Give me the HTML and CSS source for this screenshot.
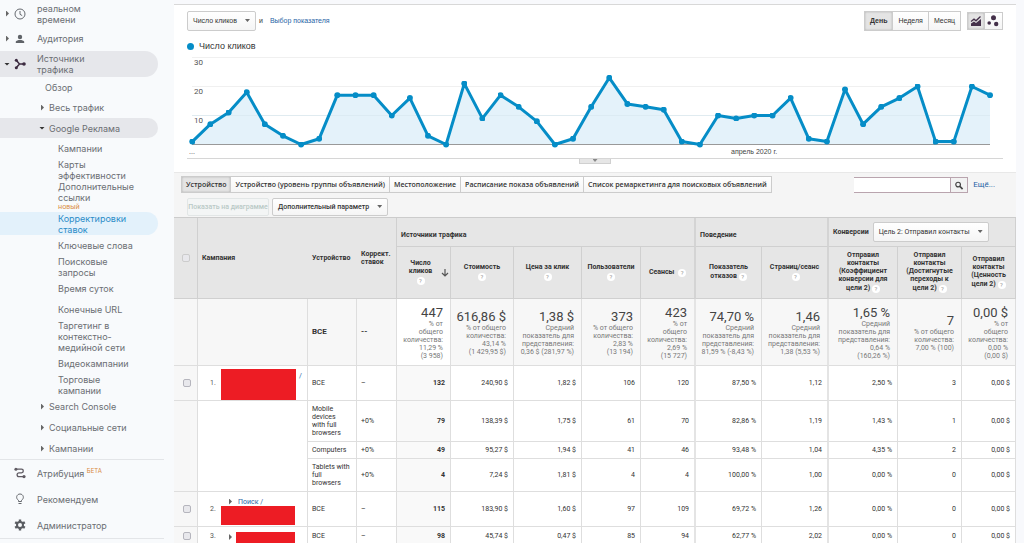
FILE: index.html
```html
<!DOCTYPE html>
<html lang="ru">
<head>
<meta charset="utf-8">
<title>Корректировки ставок</title>
<link rel="stylesheet" href="styles.css">
</head>
<body>
<div class="app">
<nav class="sidebar">
  <ul class="nav">
    <li><a class="item top first" href="#"><span class="caret"></span><svg class="icon" viewBox="0 0 12 12"><circle cx="6" cy="6" r="5" fill="none" stroke="#666a70"/><path d="M6 3v3.3l2.2 1.3" fill="none" stroke="#666a70"/></svg><span>реальном<br>времени</span></a></li>
    <li><a class="item top second" href="#"><span class="caret"></span><svg class="icon" viewBox="0 0 12 12"><circle cx="6" cy="4" r="2.2" fill="#5f6368"/><path d="M1.8 10V8.8C1.8 7.4 4.5 6.9 6 6.9s4.200.5 4.200 1.900V10z" fill="#5f6368"/></svg><span>Аудитория</span></a></li>
    <li><a class="item top pill tall" href="#"><span class="caret open"></span><svg class="icon" viewBox="0 0 12 12"><path d="M2.500 2.500 5.500 6 2.500 9.500M5.500 6h4.500" fill="none" stroke="#3c2b40" stroke-width="1.500"/><circle cx="2.300" cy="2.300" r="1.500" fill="#3c2b40"/><circle cx="2.300" cy="9.700" r="1.500" fill="#3c2b40"/><circle cx="10" cy="6" r="1.800" fill="#3c2b40"/></svg><span>Источники<br>трафика</span></a></li>
    <li><a class="item mid plain" href="#">Обзор</a></li>
    <li><a class="item mid" href="#"><span class="caret"></span>Весь трафик</a></li>
    <li><a class="item mid pill" href="#"><span class="caret open"></span>Google Реклама</a></li>
    <li><a class="item leaf" href="#">Кампании</a></li>
    <li><a class="item leaf" href="#">Карты<br>эффективности</a></li>
    <li><a class="item leaf" href="#">Дополнительные<br>ссылки</a></li>
    <li class="new">новый</li>
    <li><a class="item leaf pill current" href="#">Корректировки<br>ставок</a></li>
    <li><a class="item leaf" href="#">Ключевые слова</a></li>
    <li><a class="item leaf" href="#">Поисковые<br>запросы</a></li>
    <li><a class="item leaf" href="#">Время суток</a></li>
    <li><a class="item leaf" href="#">Конечные URL</a></li>
    <li><a class="item leaf" href="#">Таргетинг в<br>контекстно-<br>медийной сети</a></li>
    <li><a class="item leaf" href="#">Видеокампании</a></li>
    <li><a class="item leaf" href="#">Торговые<br>кампании</a></li>
    <li><a class="item mid" href="#"><span class="caret"></span>Search Console</a></li>
    <li><a class="item mid" href="#"><span class="caret"></span>Социальные сети</a></li>
    <li><a class="item mid" href="#"><span class="caret"></span>Кампании</a></li>
  </ul>
  <ul class="nav footer">
    <li><a class="item top" href="#"><svg class="icon" viewBox="0 0 12 12"><path d="M2 2.200h5.500a1.800 1.800 0 0 1 0 3.600H5a1.900 1.900 0 0 0 0 3.800h5" fill="none" stroke="#5f5a62" stroke-width="1.300"/><circle cx="1.900" cy="2.200" r="1.500" fill="#5f5a62"/><circle cx="10" cy="9.600" r="1.600" fill="#5f5a62"/></svg><span>Атрибуция <sup>БЕТА</sup></span></a></li>
    <li><a class="item top" href="#"><svg class="icon" viewBox="0 0 12 12"><path d="M4.500 8.500V7.300C1.200 5.200 2.700 1 6 1s4.800 4.200 1.500 6.300v1.200zM4.500 10.500h3" fill="none" stroke="#66696e"/></svg><span>Рекомендуем</span></a></li>
    <li><a class="item top" href="#"><svg class="icon" viewBox="0 0 12 12"><circle cx="6" cy="6" r="3" fill="none" stroke="#5a5d62" stroke-width="2"/><path d="M6 .4v2.400M6 9.200v2.400M1.150 3.200l2.080 1.200M8.770 7.600l2.080 1.200M1.150 8.800l2.080-1.200M8.770 4.400l2.080-1.200" stroke="#5a5d62" stroke-width="2.400"/></svg><span>Администратор</span></a></li>
  </ul>
</nav>

<main class="main">
  <section class="card">
    <div class="toolbar">
      <button class="btn drop" type="button">Число кликов</button>
      <span>и</span>
      <a class="link metric" href="#">Выбор показателя</a>
      <div class="group period">
        <button class="btn on" type="button">День</button><button class="btn" type="button">Неделя</button><button class="btn" type="button">Месяц</button>
      </div>
      <div class="group views">
        <button class="btn on" type="button" aria-label="График"><svg viewBox="0 0 12 12"><path d="M1 11V8.500l3-2 2 1.500 5-4V11z" fill="#44304a"/><path d="M1 6.500 4 4.200l2 1.600 4.500-4.300" fill="none" stroke="#44304a" stroke-width="1.300"/></svg></button><button class="btn" type="button" aria-label="Диаграмма движения"><svg viewBox="0 0 12 12"><circle cx="6.500" cy="2.800" r="2.500" fill="#44304a"/><circle cx="2.200" cy="8" r="1.800" fill="#44304a"/><circle cx="9.200" cy="9" r="2.200" fill="#44304a"/></svg></button>
      </div>
    </div>
    <div class="legend"><span class="dot"></span>Число кликов</div>
    <svg class="chart" viewBox="0 0 842 104">
      <defs><marker id="pt" markerWidth="6" markerHeight="6" refX="3" refY="3" markerUnits="userSpaceOnUse"><circle cx="3" cy="3" r="3" fill="#058dc7"/></marker></defs>
      <path d="M18 3.500H816M18 32.500H816M18 61.500H816" stroke="#f0f0f0"/>
      <path fill="#e4f2fa" d="M18.300 90.500V87.600L36.400 70.200 54.600 58.600 72.700 38.300 90.800 70.200 109 81.800 127.100 90.500 145.200 84.700 163.300 41.200 181.500 41.200 199.600 41.200 217.700 61.500 235.900 44.100 254 81.800 272.100 90.500 290.300 29.600 308.400 64.400 326.500 41.200 344.600 52.800 362.800 67.300 380.900 90.500 399 84.700 417.200 52.800 435.300 23.800 453.400 49.900 471.600 52.800 489.700 55.700 507.800 87.600 525.900 90.500 544.100 61.500 562.200 64.400 580.300 61.500 598.500 61.500 616.600 44.100 634.700 84.700 652.900 87.600 671 35.400 689.100 70.200 707.200 52.800 725.400 44.100 743.500 32.500 761.600 87.600 779.800 87.600 797.900 32.500 816 41.200V90.500z"/>
      <path d="M18 61.500H816" stroke="#d8e8f0" stroke-opacity=".7"/>
      <path d="M18 90.500H816" stroke="#999"/>
      <polyline class="series" points="18.300,87.600 36.400,70.200 54.600,58.600 72.700,38.300 90.800,70.200 109,81.800 127.100,90.500 145.200,84.700 163.300,41.200 181.500,41.200 199.600,41.200 217.700,61.500 235.900,44.100 254,81.800 272.100,90.500 290.300,29.600 308.400,64.400 326.500,41.200 344.600,52.800 362.800,67.300 380.900,90.500 399,84.700 417.200,52.800 435.300,23.800 453.400,49.900 471.600,52.800 489.700,55.700 507.800,87.600 525.900,90.500 544.100,61.500 562.200,64.400 580.300,61.500 598.500,61.500 616.600,44.100 634.700,84.700 652.900,87.600 671,35.400 689.100,70.200 707.200,52.800 725.400,44.100 743.500,32.500 761.600,87.600 779.800,87.600 797.900,32.500 816,41.200"/>
      <g class="axis"><text x="20" y="11">30</text><text x="20" y="40">20</text><text x="20" y="69">10</text></g>
      <text class="month" x="15" y="100">...</text><text class="month" x="557" y="100">апрель 2020 г.</text>
    </svg>
    <div class="splitter"><span class="handle"></span></div>
  </section>

  <section class="explorer">
    <div class="tabs">
      <div class="group">
        <button class="btn on" type="button">Устройство</button><button class="btn" type="button">Устройство (уровень группы объявлений)</button><button class="btn" type="button">Местоположение</button><button class="btn" type="button">Расписание показа объявлений</button><button class="btn" type="button">Список ремаркетинга для поисковых объявлений</button>
      </div>
      <form class="search"><input type="text" aria-label="Поиск"><button type="button" aria-label="Найти"><svg viewBox="0 0 10 10"><circle cx="4" cy="4" r="2.600" fill="none" stroke="#444" stroke-width="1.300"/><path d="m6 6 3 3" stroke="#444" stroke-width="1.800"/></svg></button></form>
      <a class="link" href="#">Ещё...</a>
    </div>
    <div class="options">
      <button class="btn plot" type="button" disabled>Показать на диаграмме</button>
      <button class="btn drop" type="button">Дополнительный параметр</button>
    </div>
    <table class="report">
      <colgroup><col class="c-check"><col class="c-camp"><col class="c-dev"><col class="c-adj"><col class="c-clicks"><col class="c-cost"><col class="c-cpc"><col class="c-users"><col class="c-sess"><col class="c-bounce"><col class="c-pages"><col class="c-rate"><col class="c-goal"><col class="c-value"></colgroup>
      <thead>
        <tr class="groups"><th rowspan="2" class="mid-cell"><input type="checkbox" aria-label="Выбрать все"></th><th rowspan="2" class="left bare">Кампания</th><th rowspan="2" class="left bare">Устройство</th><th rowspan="2" class="left adj">Коррект. ставок</th><th colspan="5" class="left wide sec">Источники трафика</th><th colspan="2" class="left wide sec">Поведение</th><th colspan="3" class="left wide"><div class="goal">Конверсии <button class="btn drop" type="button">Цель 2: Отправил контакты</button></div></th></tr>
        <tr class="heads">
          <th class="sorted">Число<br>кликов<br><i class="help">?</i><svg class="arrow" viewBox="0 0 8 10"><path d="M4 1v7M1 5l3 3 3-3" fill="none" stroke="#555" stroke-width="1.200"/></svg></th>
          <th>Стоимость<br><i class="help">?</i></th><th>Цена за клик<br><i class="help">?</i></th><th>Пользователи<br><i class="help">?</i></th><th class="sec">Сеансы <i class="help">?</i></th><th>Показатель<br>отказов <i class="help">?</i></th><th class="sec">Страниц/сеанс<br><i class="help">?</i></th><th>Отправил<br>контакты<br>(Коэффициент<br>конверсии для<br>цели 2) <i class="help">?</i></th><th>Отправил<br>контакты<br>(Достигнутые<br>переходы к<br>цели 2) <i class="help">?</i></th><th>Отправил<br>контакты<br>(Ценность<br>цели 2) <i class="help">?</i></th>
        </tr>
      </thead>
      <tbody>
        <tr class="summary"><td></td><td></td><td class="left strong">ВСЕ</td><td class="left strong">--</td><td class="clicks"><b>447</b>% от<br>общего<br>количества:<br>11,29 %<br>(3 958)</td><td><b>616,86 $</b>% от общего<br>количества:<br>43,14 %<br>(1 429,95 $)</td><td><b>1,38 $</b>Средний<br>показатель для<br>представления:<br>0,36 $ (281,97 %)</td><td><b>373</b>% от общего<br>количества:<br>2,83 %<br>(13 194)</td><td class="sec"><b>423</b>% от<br>общего<br>количества:<br>2,69 %<br>(15 727)</td><td><b>74,70 %</b>Средний<br>показатель для<br>представления:<br>81,59 % (-8,43 %)</td><td class="sec"><b>1,46</b>Средний<br>показатель для<br>представления:<br>1,38 (5,53 %)</td><td><b>1,65 %</b>Средний<br>показатель для<br>представления:<br>0,64 %<br>(160,26 %)</td><td><b>7</b>% от общего<br>количества:<br>7,00 % (100)</td><td><b>0,00 $</b>% от<br>общего<br>количества:<br>0,00 %<br>(0,00 $)</td></tr>
        <tr class="r-all"><td class="mid-cell"><input type="checkbox" aria-label="Строка 1"></td><td class="camp"><div class="entry"><span class="num">1.</span><span class="mask large"></span><a class="link slash" href="#">/</a></div></td><td class="left">ВСЕ</td><td class="left">–</td><td class="clicks">132</td><td>240,90 $</td><td>1,82 $</td><td>106</td><td class="sec">120</td><td>87,50 %</td><td class="sec">1,12</td><td>2,50 %</td><td>3</td><td>0,00 $</td></tr>
        <tr class="r-mobile"><td rowspan="3" class="mid-cell"></td><td rowspan="3"></td><td class="left">Mobile<br>devices<br>with full<br>browsers</td><td class="left">+0%</td><td class="clicks">79</td><td>138,39 $</td><td>1,75 $</td><td>61</td><td class="sec">70</td><td>82,86 %</td><td class="sec">1,19</td><td>1,43 %</td><td>1</td><td>0,00 $</td></tr>
        <tr class="r-comp"><td class="left">Computers</td><td class="left">+0%</td><td class="clicks">49</td><td>95,27 $</td><td>1,94 $</td><td>41</td><td class="sec">46</td><td>93,48 %</td><td class="sec">1,04</td><td>4,35 %</td><td>2</td><td>0,00 $</td></tr>
        <tr class="r-tab"><td class="left">Tablets with<br>full<br>browsers</td><td class="left">+0%</td><td class="clicks">4</td><td>7,24 $</td><td>1,81 $</td><td>4</td><td class="sec">4</td><td>100,00 %</td><td class="sec">1,00</td><td>0,00 %</td><td>0</td><td>0,00 $</td></tr>
        <tr class="r-all"><td class="mid-cell"><input type="checkbox" aria-label="Строка 2"></td><td class="camp"><div class="entry"><span class="num">2.</span><span class="stack"><span class="name"><span class="caret"></span><a class="link" href="#">Поиск /</a></span><span class="mask medium"></span></span></div></td><td class="left">ВСЕ</td><td class="left">–</td><td class="clicks">115</td><td>183,90 $</td><td>1,60 $</td><td>97</td><td class="sec">109</td><td>69,72 %</td><td class="sec">1,26</td><td>0,00 %</td><td>0</td><td>0,00 $</td></tr>
        <tr class="r-last"><td class="mid-cell"><input type="checkbox" aria-label="Строка 3"></td><td class="camp"><div class="entry"><span class="num">3.</span><span class="caret"></span><span class="mask small"></span></div></td><td class="left">ВСЕ</td><td class="left">–</td><td class="clicks">98</td><td>45,74 $</td><td>0,47 $</td><td>85</td><td class="sec">94</td><td>62,77 %</td><td class="sec">2,02</td><td>0,00 %</td><td>0</td><td>0,00 $</td></tr>
      </tbody>
    </table>
  </section>
</main>
</div>
</body>
</html>
```
FILE: styles.css
```css
* { box-sizing: border-box; }
body { margin: 0; background: #f8f9fc; color: #333; font: 7px/8px Roboto, "Liberation Sans", sans-serif; }
a { text-decoration: none; }
button, input { font: inherit; color: inherit; margin: 0; }
.app { display: flex; height: 100vh; overflow: hidden; }

/* Navigation */
.sidebar { flex: 0 0 174px; background: #f8fafc; padding-right: 10px; }
.nav { list-style: none; margin: 0; padding: 0; font: 9px/11px Inter, "Open Sans", sans-serif; }
.item { display: flex; align-items: center; min-height: 21px; margin-right: 6px; color: #6b6e73; white-space: nowrap; }
.top { display: grid; grid-template-columns: 14px 12px 1fr; }
.top > span:last-child { padding-left: 11px; }
.first { height: 27px; }
.second { height: 23px; margin-bottom: 1px; }
.tall { height: 26px; }
.top .icon { grid-column: 2; width: 12px; height: 12px; }
.top .caret { margin-left: 6px; }
.top .caret.open { margin-left: 4px; }
.mid { padding-left: 41px; }
.mid .caret { margin-right: 5px; }
.mid .caret.open { margin: 0 4px 0 -2px; }
.plain { padding-left: 45px; min-height: 20px; }
.leaf { padding-left: 58px; }
.leaf:has(br) { min-height: 22px; }
.pill { background: #e6e7eb; border-radius: 0 13px 13px 0; min-height: 20px; }
.pill.current { background: #e3f1fb; color: #2a8cc8; min-height: 23px; }
.new { height: 9px; padding-left: 58px; color: #d98a3d; font-size: 7px; line-height: 7px; }
.footer { border-top: 1px solid #e3e5e8; border-bottom: 1px solid #e3e5e8; }
.footer .item { min-height: 26px; }
.footer sup { color: #d98a3d; font-size: 6px; line-height: 0; vertical-align: 4px; }
.caret { display: inline-block; flex: none; width: 3px; height: 6px; background: #666; clip-path: polygon(0 0, 100% 50%, 0 100%); }
.caret.open { width: 6px; height: 3px; background: #333; clip-path: polygon(0 0, 100% 0, 50% 100%); }

/* Shared controls */
.main { flex: 1; min-width: 0; margin-right: 8px; }
.link { color: #2763a5; }
.btn { border: 1px solid #ccc; border-radius: 2px; background: linear-gradient(#fff, #f5f5f5); padding: 0 5px; color: #333; white-space: nowrap; font-weight: 500; }
.btn.on { background: #e4e4e4; box-shadow: inset 0 0 2px #aaa; font-weight: 700; }
.drop::after { content: ""; display: inline-block; width: 5px; height: 3px; margin: 0 0 1px 8px; background: #666; clip-path: polygon(0 0, 100% 0, 50% 100%); }
.group { display: flex; }
.group .btn { border-radius: 0; }
.group .btn + .btn { border-left: 0; }

/* Chart */
.card { margin-top: 4px; border-top: 1px solid #d8d8d8; background: #fff; padding-top: 6px; height: 168px; }
.toolbar { display: flex; align-items: center; height: 20px; padding: 0 13px; font-family: "Liberation Sans", sans-serif; }
.toolbar .btn { height: 20px; font-weight: 400; }
.toolbar .btn.on { font-weight: 700; }
.toolbar > span { margin: 0 7px 0 3px; }
.period { margin-left: auto; }
.views { margin-left: 6px; }
.views .btn { height: 18px; width: 18px; padding: 2px; }
.views svg { display: block; width: 12px; height: 12px; }
.legend { display: flex; align-items: center; gap: 5px; height: 16px; margin: 7px 0 0 13px; font: 9px/10px "Liberation Sans", sans-serif; }
.dot { width: 7px; height: 7px; border-radius: 50%; background: #058dc7; }
.chart { display: block; width: 100%; }
.series { fill: none; stroke: #058dc7; stroke-width: 3; stroke-linejoin: round; marker: url(#pt); }
.axis { font: 8px Roboto, sans-serif; fill: #555; }
.month { font: 7px "Liberation Sans", sans-serif; fill: #444; }
.splitter { display: flex; justify-content: center; margin: 0 13px; border-top: 1px solid #d6d6d6; }
.handle { display: flex; justify-content: center; width: 32px; height: 5px; background: #e6e6e6; border: 1px solid #d0d0d0; border-top: 0; }
.handle::after { content: ""; width: 5px; height: 3px; background: #888; clip-path: polygon(0 0, 100% 0, 50% 100%); }

/* Explorer */
.explorer { background: #f5f5f5; border-top: 1px solid #e8e8e8; padding-top: 3px; }
.tabs { display: flex; align-items: center; padding-left: 7px; height: 17px; }
.tabs .btn { height: 17px; padding: 0 4px; font-family: "Open Sans", sans-serif; font-weight: 600; }
.search { display: flex; margin-left: auto; }
.search input { width: 96px; height: 16px; border: 1px solid #b9a4ae; border-width: 1px 0; background: #fff; padding: 0 4px; }
.search button { width: 18px; height: 16px; border: 1px solid #b9a4ae; background: #f2f2f2; padding: 3px; }
.search svg { display: block; width: 10px; height: 9px; }
.tabs > .link { margin: 0 21px 0 5px; font-size: 8px; }
.options { display: flex; gap: 3px; padding: 5px 13px 1px; }
.options .btn { height: 18px; }
.options .plot { width: 82px; padding: 0; color: #b9c9c6; background: #f3f5f5; border-color: #e2e6e6; overflow: hidden; }

/* Report */
.report { width: 100%; table-layout: fixed; border-collapse: separate; border-spacing: 0; border-top: 1px solid #ccc; background: #fff; }
.c-check { width: 24px; } .c-camp { width: 110px; } .c-dev { width: 49px; } .c-adj { width: 40px; }
.c-clicks { width: 54px; } .c-cost { width: 63px; } .c-cpc { width: 68px; } .c-users { width: 59px; }
.c-sess { width: 55px; } .c-bounce { width: 66px; } .c-pages { width: 67px; } .c-rate { width: 69px; }
.c-goal { width: 64px; } .c-value { width: 54px; }
.report th { background: #e6e6e6; border: solid #d0d0d0; border-width: 0 1px 1px 0; padding: 0; font-weight: 700; text-align: center; vertical-align: middle; color: #333; }
.report td { border: solid #dedede; border-width: 0 1px 1px 0; padding: 0 5px 0 0; text-align: right; vertical-align: middle; white-space: nowrap; }
.report .sec { border-right: 2px solid #d4d4d4; }
.report td.sec { border-right-color: #e4e4e4; }
.report .left { text-align: left; padding: 0 0 0 4px; }
.report th.bare { border-right: 0; }
.report .wide { padding: 6px 0 0 4px; }
.report th:has(.goal) { padding-top: 0; }
.groups { height: 29px; } .heads { height: 52px; } .summary { height: 67px; }
.r-all { height: 35px; } .r-mobile { height: 41px; } .r-comp { height: 17px; } .r-tab { height: 33px; } .r-last { height: 35px; }
.r-last td { vertical-align: top; padding-top: 5px; }
.report .r-last td { vertical-align: top; padding-top: 5px; }
.goal { display: flex; align-items: center; gap: 4px; }
.goal .btn { height: 20px; font-weight: 400; }
.heads th { position: relative; }
.report .sorted { padding-right: 6px; }
.arrow { position: absolute; right: 1px; top: 21px; width: 8px; height: 10px; }
.help { display: inline-block; width: 8px; height: 8px; margin: 2px 0 1px; border-radius: 50%; background: #fff; color: #999; font: 6px/8px Roboto, sans-serif; text-align: center; vertical-align: middle; }
.sec .help { margin-left: 2px; }
.report .summary td { background: #f7f7f7; color: #777; padding-right: 7px; }
.report .summary td.clicks { background: #fff; font-weight: 400; }
.report .summary td.strong { color: #333; font-weight: 700; font-size: 8px; }
.summary b { display: block; color: #444; font: 13px/15px Roboto, sans-serif; }
.report .clicks { background: #f9f9f9; font-weight: 700; }
.report .mid-cell { text-align: center; padding-right: 0; }
.report td.mid-cell { background: #f7f7f7; padding-left: 3px; }
.mid-cell input { appearance: none; display: inline-block; width: 8px; height: 8px; border: 1px solid #b5b5bd; border-radius: 2px; background: #e8e8ec; vertical-align: middle; }
th.mid-cell input { border-color: #ccc; }
.report .camp { padding: 0; text-align: left; }
.entry { display: flex; align-items: center; }
.num { width: 23px; padding-left: 12px; color: #555; }
.mask { display: block; background: #ed1c24; }
.large { width: 75px; height: 31px; margin-top: 3px; }
.medium { width: 74px; height: 19px; }
.small { width: 59px; height: 27px; margin-left: 4px; }
.slash { align-self: flex-start; margin: 6px 0 0 3px; }
.stack { padding-top: 4px; }
.name { display: flex; align-items: center; gap: 6px; padding-left: 8px; }
.r-last .entry { align-items: flex-start; }
.r-last .caret { margin: 2px 0 0 8px; }
```
